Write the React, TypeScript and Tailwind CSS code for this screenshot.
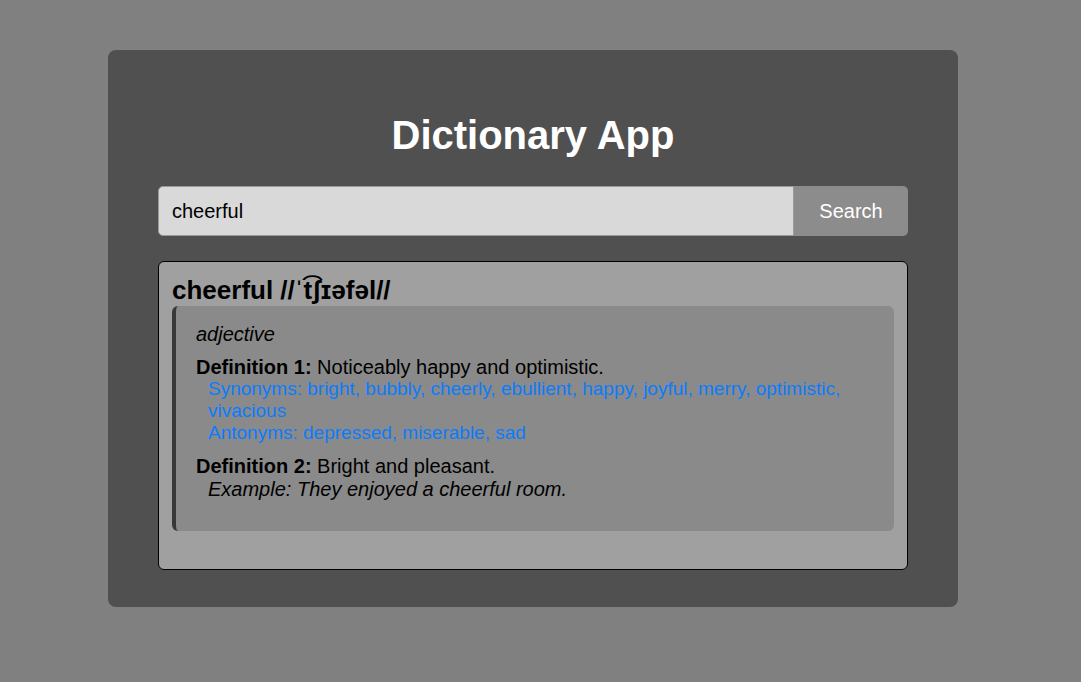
export default function App() {
  return (
    <div className="min-h-screen w-full bg-[#808080] pt-[50px] pr-[15px] font-['Liberation_Sans',Arial,sans-serif]">
      <div className="mx-auto w-[850px] rounded-lg bg-[#505050] px-[50px] pt-[62px] pb-[37px]">
        <h1 className="text-center text-[40px] leading-[46px] font-bold text-white">
          Dictionary App
        </h1>
        <div className="mt-[28px] flex h-[50px]">
          <input
            className="h-full flex-1 rounded-l-[5px] border border-[#9a9a9a] bg-[#d9d9d9] px-[13px] text-[20px] text-black outline-none"
            defaultValue="cheerful"
          />
          <button className="h-full w-[114px] rounded-r-[5px] bg-[#8c8c8c] text-[20px] text-white">
            Search
          </button>
        </div>
        <div className="mt-[25px] rounded-[6px] border border-black bg-[#a0a0a0] px-[13px] pt-[13px] pb-[38px]">
          <h2 className="text-[26px] leading-[30px] font-bold text-black">
            cheerful //ˈt͡ʃɪəfəl//
          </h2>
          <div className="mt-px rounded-[6px] border-l-4 border-[#383838] bg-[#8a8a8a] pt-[17px] pr-5 pb-[31px] pl-5 text-[20px] leading-[22px] text-black">
            <p className="italic">adjective</p>
            <div className="mt-[11px]">
              <p>
                <span className="font-bold">Definition 1:</span> Noticeably happy and optimistic.
              </p>
              <p className="ml-3 text-[19px] text-[#0a7cff]">
                Synonyms: bright, bubbly, cheerly, ebullient, happy, joyful, merry, optimistic, vivacious
              </p>
              <p className="ml-3 text-[19px] text-[#0a7cff]">Antonyms: depressed, miserable, sad</p>
            </div>
            <div className="mt-[11px]">
              <p>
                <span className="font-bold">Definition 2:</span> Bright and pleasant.
              </p>
              <p className="mt-px ml-3 italic">Example: They enjoyed a cheerful room.</p>
            </div>
          </div>
        </div>
      </div>
    </div>
  );
}
